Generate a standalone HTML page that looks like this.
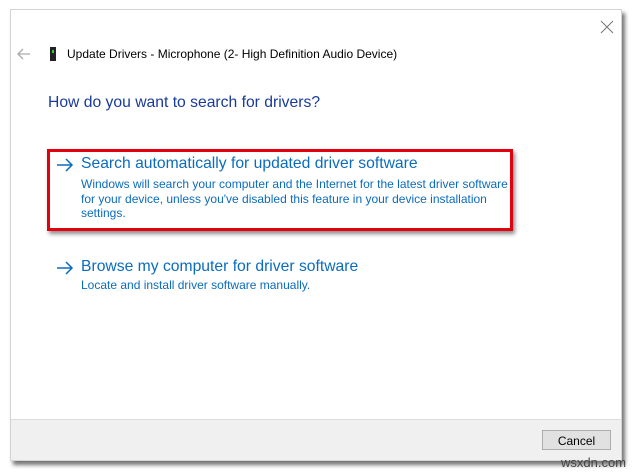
<!DOCTYPE html>
<html><head><style>
body{margin:0;width:634px;height:472px;background:#fff;position:relative;overflow:hidden;font-family:"Liberation Sans",sans-serif}
.win{position:absolute;left:10px;top:9px;width:612px;height:452px;background:#fff;border:1px solid #d4d4d4;box-shadow:3px 4px 4px rgba(0,0,0,.55);box-sizing:border-box}
.foot{position:absolute;left:0;right:0;bottom:0;height:40px;background:#f0f0f0;border-top:1px solid #dcdcdc}
.btn{position:absolute;left:531px;top:10px;width:69px;height:20px;border:1px solid #adadad;background:#e1e1e1;font-size:12px;text-align:center;line-height:20px;color:#000;box-sizing:border-box}
.t{position:absolute;white-space:nowrap}
.red{position:absolute;left:47px;top:149px;width:466px;height:82px;border:3px solid #e3000f;box-sizing:border-box;box-shadow:2px 3px 4px rgba(0,0,0,.45)}
.lk{color:#0b6cbe}
</style></head><body>
<div class="win">
<svg style="position:absolute;left:589px;top:10px" width="14" height="14"><path d="M1 1L13 13M13 1L1 13" stroke="#777" stroke-width="1"/></svg>
<div class="foot"><div class="btn">Cancel</div></div>
</div>
<svg style="position:absolute;left:17px;top:48px" width="14" height="12"><path d="M1 6H13M6 1L1 6L6 11" stroke="#aaa" stroke-width="1.3" fill="none"/></svg>
<div style="position:absolute;left:50px;top:47px;width:6px;height:14px;background:#222"></div>
<div style="position:absolute;left:52px;top:50px;width:2px;height:3px;background:#3c3"></div>
<div class="t" style="left:67px;top:47px;font-size:12px;color:#000">Update Drivers - Microphone (2- High Definition Audio Device)</div>
<div class="t" style="left:48px;top:94px;font-size:15.7px;color:#1a3a9a">How do you want to search for drivers?</div>
<div class="red"></div>
<svg style="position:absolute;left:56px;top:158px" width="18" height="14"><path d="M1 7H16M10 1L16 7L10 13" stroke="#0b6cbe" stroke-width="1.5" fill="none"/></svg>
<div class="t lk" style="left:81px;top:155px;font-size:15.7px">Search automatically for updated driver software</div>
<div class="t lk" style="left:81px;top:177px;font-size:12px;line-height:14.5px">Windows will search your computer and the Internet for the latest driver software<br>for your device, unless you've disabled this feature in your device installation<br>settings.</div>
<svg style="position:absolute;left:56px;top:261px" width="18" height="14"><path d="M1 7H16M10 1L16 7L10 13" stroke="#0b6cbe" stroke-width="1.5" fill="none"/></svg>
<div class="t lk" style="left:81px;top:258px;font-size:15.7px">Browse my computer for driver software</div>
<div class="t lk" style="left:81px;top:278px;font-size:12px">Locate and install driver software manually.</div>
<div class="t" style="left:561px;top:455px;font-size:13px;color:#444">wsxdn.com</div>
</body></html>
